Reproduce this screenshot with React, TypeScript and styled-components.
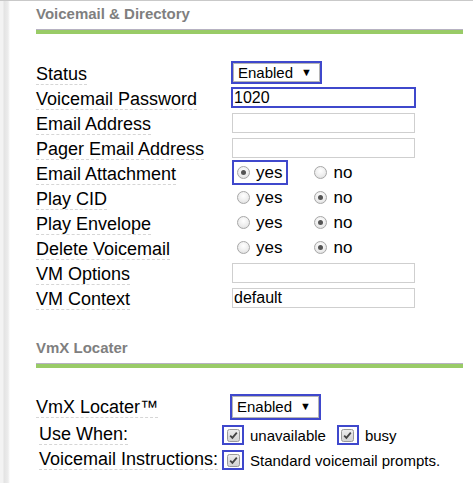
import React from 'react';
import styled, { createGlobalStyle } from 'styled-components';

const GlobalStyle = createGlobalStyle`
  html, body {
    margin: 0;
    padding: 0;
    background: #ffffff;
  }
  body {
    font-family: "Liberation Sans", Arial, sans-serif;
    color: #000;
  }
`;

const BLUE = '#3f48cc';

const Page = styled.div`
  display: flex;
  min-height: 483px;
  border-top: 1px solid #c9c9c9;
  box-sizing: border-box;
`;

const Gutter = styled.div`
  width: 10px;
  flex: none;
  background: linear-gradient(to right, #f3f3f3 0, #f3f3f3 3px, #e3e3e3 4px, #ececec 8px, #ffffff 10px);
`;

const Main = styled.div`
  flex: 1;
  padding: 0 10px 0 26px;
`;

const Heading = styled.h2<{ $top: number }>`
  margin: ${(p) => p.$top}px 0 0;
  font-size: 15px;
  line-height: 18px;
  font-weight: bold;
  color: #7f7f7f;
`;

const Rule = styled.div`
  margin-top: 6px;
  height: 4px;
  background: #99cb67;
  border-top: 1px solid #b7b2c2;
`;

const Form = styled.div<{ $top: number }>`
  margin-top: ${(p) => p.$top}px;
`;

const Row = styled.div<{ $cols?: number; $h?: number; $align?: string }>`
  display: grid;
  grid-template-columns: ${(p) => p.$cols ?? 196}px 1fr;
  height: ${(p) => p.$h ?? 25}px;
  align-items: ${(p) => p.$align ?? 'center'};
`;

const Label = styled.span<{ $indent?: number }>`
  justify-self: start;
  align-self: start;
  margin: 4px 0 0 ${(p) => p.$indent ?? 0}px;
  font-size: 18px;
  line-height: 20px;
  white-space: nowrap;
  border-bottom: 1px dashed #d6d6d6;
`;

const Select = styled.div<{ $h: number; $shift?: number }>`
  justify-self: start;
  display: inline-flex;
  align-items: center;
  box-sizing: border-box;
  height: ${(p) => p.$h}px;
  margin-left: ${(p) => p.$shift ?? -1}px;
  padding: 0 8px 0 5px;
  border: 2px solid ${BLUE};
  box-shadow: inset 0 0 0 1px #b5b5b5;
  font-size: 15px;
  background: #fff;
`;

const Arrow = styled.span`
  margin-left: 8px;
  font-size: 11px;
  line-height: 1;
`;

const TextInput = styled.div<{ $focus?: boolean }>`
  justify-self: start;
  box-sizing: border-box;
  width: ${(p) => (p.$focus ? 185 : 183)}px;
  height: ${(p) => (p.$focus ? 21 : 20)}px;
  margin-left: ${(p) => (p.$focus ? -1 : 0)}px;
  border: ${(p) => (p.$focus ? `2px solid ${BLUE}` : '1px solid #cfcfcf')};
  padding-left: 1px;
  font-size: 16px;
  line-height: ${(p) => (p.$focus ? 17 : 18)}px;
  background: #fff;
`;

const RadioGroup = styled.div`
  display: flex;
  align-items: center;
  height: 25px;
`;

const Option = styled.label<{ $focus?: boolean }>`
  display: inline-flex;
  align-items: center;
  gap: 6px;
  box-sizing: border-box;
  height: 25px;
  padding: 0 4px 0 3px;
  border: 2px solid ${(p) => (p.$focus ? BLUE : 'transparent')};
  font-size: 17px;
  &:first-child {
    margin-right: 21px;
  }
`;

const RadioDot = styled.span<{ $on?: boolean }>`
  position: relative;
  width: 13px;
  height: 13px;
  box-sizing: border-box;
  border-radius: 50%;
  border: 1px solid #a7a7a7;
  background: radial-gradient(circle at 50% 35%, #ffffff 0%, #ececec 60%, #d6d6d6 100%);
  &::after {
    content: '';
    display: ${(p) => (p.$on ? 'block' : 'none')};
    position: absolute;
    left: 3px;
    top: 3px;
    width: 5px;
    height: 5px;
    border-radius: 50%;
    background: #555;
  }
`;

const CheckGroup = styled.div`
  display: flex;
  align-items: center;
  font-size: 15px;
  white-space: nowrap;
`;

const CheckFrame = styled.span`
  display: inline-flex;
  align-items: center;
  justify-content: center;
  box-sizing: border-box;
  width: 22px;
  height: 20px;
  border: 2px solid ${BLUE};
  margin-right: 6px;
`;

const CheckText = styled.span`
  margin-right: 11px;
`;

function Checkbox() {
  return (
    <CheckFrame>
      <svg width="13" height="13" viewBox="0 0 13 13">
        <defs>
          <linearGradient id="cbg" x1="0" y1="0" x2="0" y2="1">
            <stop offset="0" stopColor="#eeeeee" />
            <stop offset="1" stopColor="#d2d2d2" />
          </linearGradient>
        </defs>
        <rect x="0.5" y="0.5" width="12" height="12" rx="2" fill="url(#cbg)" stroke="#9a9a9a" />
        <path d="M3.2 6.6 L5.4 8.8 L9.8 3.6" fill="none" stroke="#444" strokeWidth="1.8" />
      </svg>
    </CheckFrame>
  );
}

function YesNo({ yes, focus }: { yes: boolean; focus?: boolean }) {
  return (
    <RadioGroup>
      <Option $focus={focus}>
        <RadioDot $on={yes} />
        yes
      </Option>
      <Option>
        <RadioDot $on={!yes} />
        no
      </Option>
    </RadioGroup>
  );
}

export default function App() {
  return (
    <>
      <GlobalStyle />
      <Page>
        <Gutter />
        <Main>
          <Heading $top={4}>Voicemail &amp; Directory</Heading>
          <Rule />
          <Form $top={26}>
            <Row>
              <Label>Status</Label>
              <Select $h={23}>
                Enabled<Arrow>▼</Arrow>
              </Select>
            </Row>
            <Row>
              <Label>Voicemail Password</Label>
              <TextInput $focus>1020</TextInput>
            </Row>
            <Row>
              <Label>Email Address</Label>
              <TextInput />
            </Row>
            <Row>
              <Label>Pager Email Address</Label>
              <TextInput />
            </Row>
            <Row>
              <Label>Email Attachment</Label>
              <YesNo yes focus />
            </Row>
            <Row>
              <Label>Play CID</Label>
              <YesNo yes={false} />
            </Row>
            <Row>
              <Label>Play Envelope</Label>
              <YesNo yes={false} />
            </Row>
            <Row>
              <Label>Delete Voicemail</Label>
              <YesNo yes={false} />
            </Row>
            <Row>
              <Label>VM Options</Label>
              <TextInput />
            </Row>
            <Row>
              <Label>VM Context</Label>
              <TextInput>default</TextInput>
            </Row>
          </Form>

          <Heading $top={29}>VmX Locater</Heading>
          <Rule />
          <Form $top={25}>
            <Row $cols={186} $h={27}>
              <Label>VmX Locater™</Label>
              <Select $h={26} $shift={8}>
                Enabled<Arrow>▼</Arrow>
              </Select>
            </Row>
            <Row $cols={186} $align="end">
              <Label $indent={3}>Use When:</Label>
              <CheckGroup>
                <Checkbox />
                <CheckText>unavailable</CheckText>
                <Checkbox />
                <span>busy</span>
              </CheckGroup>
            </Row>
            <Row $cols={186} $align="end">
              <Label $indent={3}>Voicemail Instructions:</Label>
              <CheckGroup>
                <Checkbox />
                <span>Standard voicemail prompts.</span>
              </CheckGroup>
            </Row>
          </Form>
        </Main>
      </Page>
    </>
  );
}
